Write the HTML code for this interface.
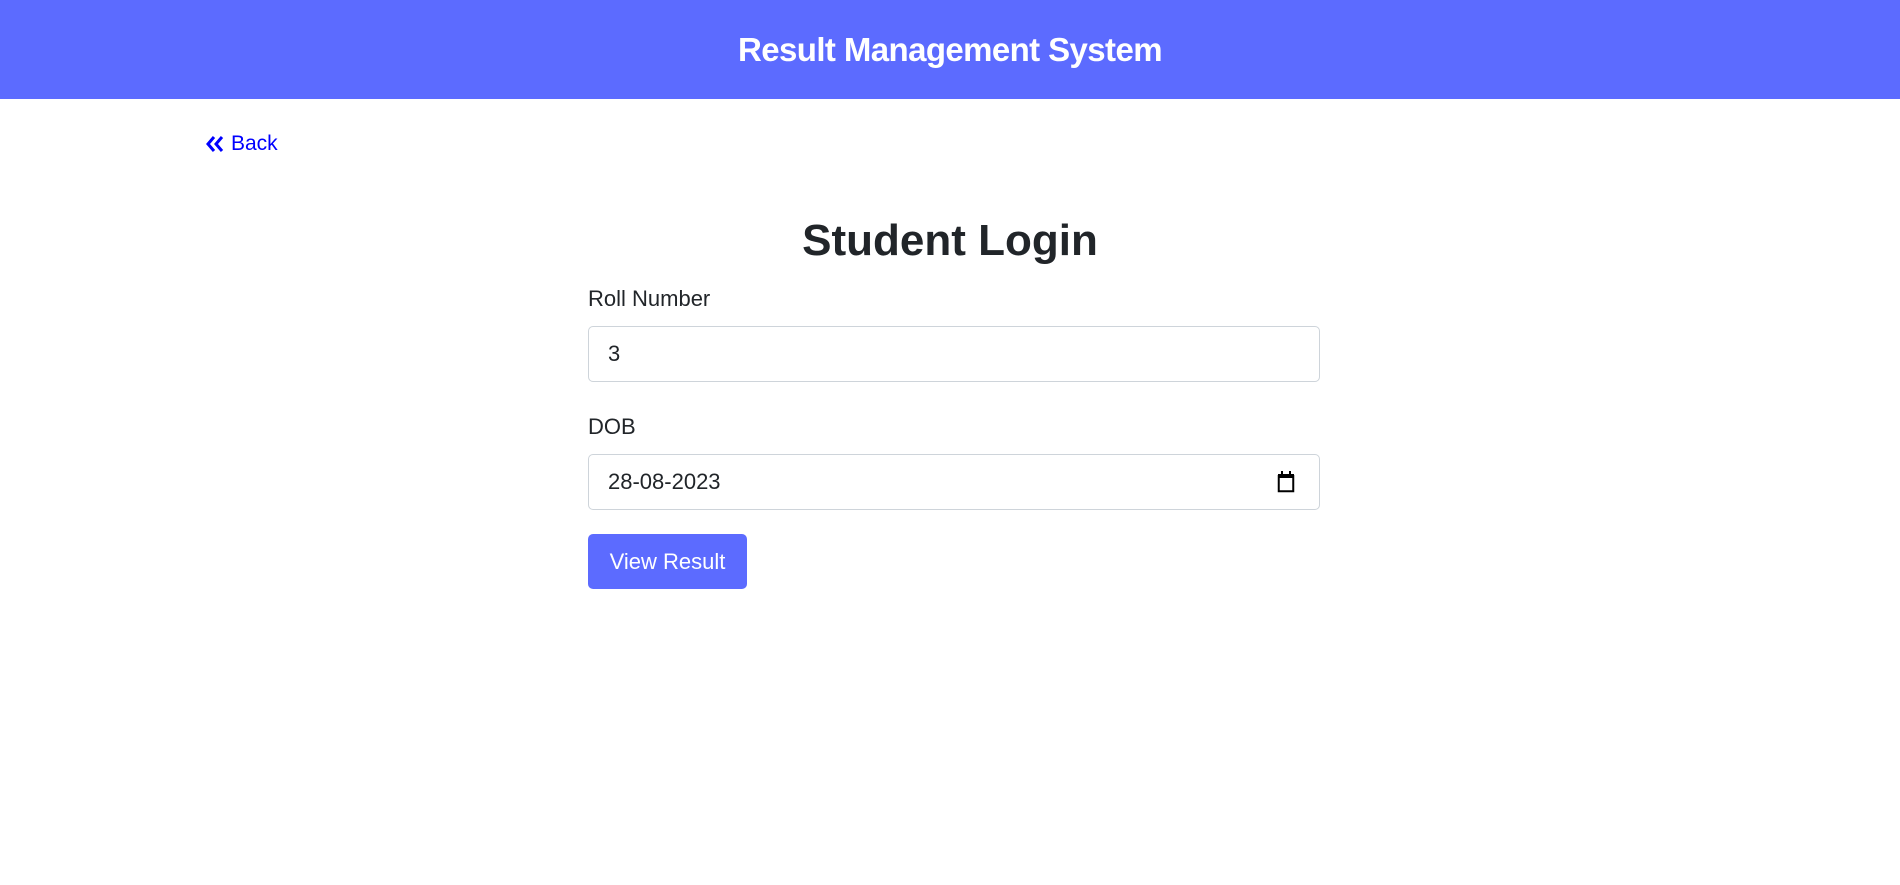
<!DOCTYPE html>
<html><head><meta charset="utf-8"><style>
*{box-sizing:border-box;margin:0;padding:0}
body{width:1900px;height:885px;background:#fff;font-family:"Liberation Sans",sans-serif;color:#212529;position:relative;overflow:hidden}
.hdr{position:absolute;left:0;top:0;width:1900px;height:99px;background:#5c6bff;color:#fff;font-weight:bold;font-size:33px;letter-spacing:-0.6px;text-align:center;line-height:99px}
.back{position:absolute;left:205px;top:132px;color:#0000ff;font-size:21px;display:flex;align-items:center;gap:6px}
h1{position:absolute;left:0;width:1900px;top:216px;text-align:center;font-size:44px;font-weight:bold;line-height:50px}
.lbl{position:absolute;left:588px;font-size:22px}
.inp{position:absolute;left:588px;width:732px;height:56px;border:1px solid #ced4da;border-radius:5px;font-size:22px;padding-left:19px;line-height:54px}
.btn{position:absolute;left:588px;top:534px;width:159px;height:55px;background:#5c6bff;border-radius:5px;color:#fff;font-size:22px;text-align:center;line-height:55px}
</style></head><body>
<div class="hdr">Result Management System</div>
<div class="back"><svg width="20" height="18" viewBox="0 0 20 18"><path d="M9 2 L3 9 L9 16 M17 2 L11 9 L17 16" fill="none" stroke="#0000ff" stroke-width="3"/></svg>Back</div>
<h1>Student Login</h1>
<div class="lbl" style="top:286px">Roll Number</div>
<div class="inp" style="top:326px">3</div>
<div class="lbl" style="top:414px">DOB</div>
<div class="inp" style="top:454px">28-08-2023
<svg style="position:absolute;left:688px;top:16px" width="18" height="22" viewBox="0 0 18 22"><rect x="1.75" y="5" width="14.5" height="15.25" fill="none" stroke="#000" stroke-width="2"/><rect x="1" y="3" width="16" height="4" fill="#000"/><rect x="4" y="0" width="2" height="4" fill="#000"/><rect x="12" y="0" width="2" height="4" fill="#000"/></svg></div>
<div class="btn">View Result</div>
</body></html>
